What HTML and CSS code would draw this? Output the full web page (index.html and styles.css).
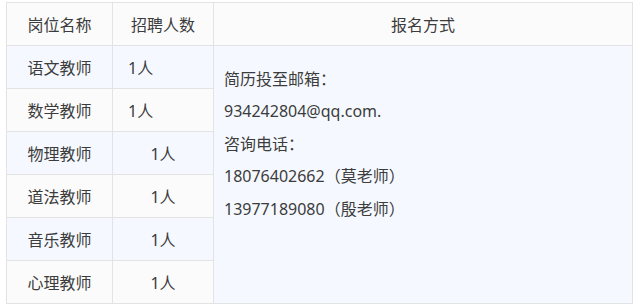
FILE: index.html
```html
<!DOCTYPE html>
<html lang="zh">
<head>
<meta charset="utf-8">
<link rel="stylesheet" href="styles.css">
</head>
<body>
<div class="wrap">
<table class="jobs">
  <colgroup>
    <col class="c1"><col class="c2"><col class="c3">
  </colgroup>
  <thead>
    <tr><th>岗位名称</th><th>招聘人数</th><th>报名方式</th></tr>
  </thead>
  <tbody>
    <tr class="odd"><td>语文教师</td><td class="left">1人</td>
      <td rowspan="6" class="info">
        <p>简历投至邮箱：</p>
        <p>934242804@qq.com.</p>
        <p>咨询电话：</p>
        <p>18076402662（莫老师）</p>
        <p>13977189080（殷老师）</p>
      </td>
    </tr>
    <tr class="even"><td>数学教师</td><td class="left">1人</td></tr>
    <tr class="odd"><td>物理教师</td><td>1人</td></tr>
    <tr class="even"><td>道法教师</td><td>1人</td></tr>
    <tr class="odd"><td>音乐教师</td><td>1人</td></tr>
    <tr class="even"><td>心理教师</td><td>1人</td></tr>
  </tbody>
</table>
</div>
</body>
</html>
```
FILE: styles.css
```css
html, body {
  margin: 0;
  padding: 0;
  background: #ffffff;
}
.wrap {
  padding: 2px 0 0 6px;
}
.jobs {
  border-collapse: collapse;
  table-layout: fixed;
  width: 627px;
  font-family: "Noto Sans", "Noto Sans CJK SC", sans-serif;
  font-size: 16px;
  color: #3c3c3c;
}
.c1 { width: 106px; }
.c2 { width: 101px; }
.jobs th, .jobs td {
  border: 1px solid #e3e3e3;
  height: 42px;
  padding: 0;
  text-align: center;
  vertical-align: middle;
  font-weight: normal;
}
.jobs thead tr { background: #fbfbfb; }
.jobs tr.odd { background: #f5f9ff; }
.jobs tr.even { background: #fbfbfb; }
.jobs td.left {
  text-align: left;
  padding-left: 15px;
}
.jobs td.info {
  text-align: left;
  vertical-align: top;
  padding: 17px 10px 0 10px;
  background: #f5f9ff;
}
.info p {
  margin: 0;
  line-height: 32.4px;
}
```
